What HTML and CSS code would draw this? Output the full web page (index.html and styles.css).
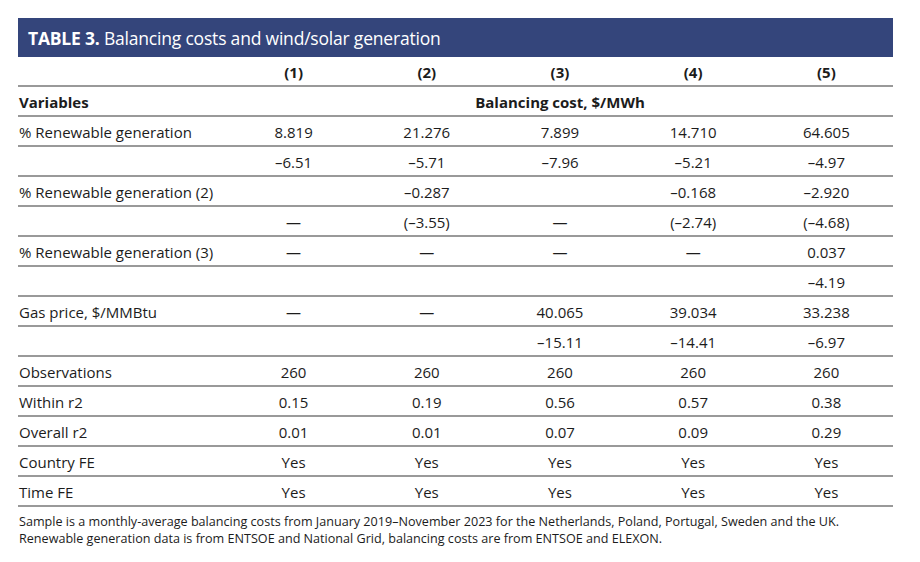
FILE: index.html
```html
<!DOCTYPE html>
<html lang="en">
<head>
<meta charset="utf-8">
<title>Table 3</title>
<link rel="stylesheet" href="styles.css">
</head>
<body>
<div class="wrap">
  <div class="title"><b>TABLE 3.</b> Balancing costs and wind/solar generation</div>
  <table class="data">
    <colgroup>
      <col class="c-label"><col class="c-num"><col class="c-num"><col class="c-num"><col class="c-num"><col class="c-num">
    </colgroup>
    <thead>
      <tr class="hrow"><th></th><th>(1)</th><th>(2)</th><th>(3)</th><th>(4)</th><th>(5)</th></tr>
      <tr class="hrow"><th class="lab">Variables</th><th colspan="5">Balancing cost, $/MWh</th></tr>
    </thead>
    <tbody>
      <tr><td>% Renewable generation</td><td>8.819</td><td>21.276</td><td>7.899</td><td>14.710</td><td>64.605</td></tr>
      <tr><td></td><td>–6.51</td><td>–5.71</td><td>–7.96</td><td>–5.21</td><td>–4.97</td></tr>
      <tr><td>% Renewable generation (2)</td><td></td><td>–0.287</td><td></td><td>–0.168</td><td>–2.920</td></tr>
      <tr><td></td><td>—</td><td>(–3.55)</td><td>—</td><td>(–2.74)</td><td>(–4.68)</td></tr>
      <tr><td>% Renewable generation (3)</td><td>—</td><td>—</td><td>—</td><td>—</td><td>0.037</td></tr>
      <tr><td></td><td></td><td></td><td></td><td></td><td>–4.19</td></tr>
      <tr><td>Gas price, $/MMBtu</td><td>—</td><td>—</td><td>40.065</td><td>39.034</td><td>33.238</td></tr>
      <tr><td></td><td></td><td></td><td>–15.11</td><td>–14.41</td><td>–6.97</td></tr>
      <tr><td>Observations</td><td>260</td><td>260</td><td>260</td><td>260</td><td>260</td></tr>
      <tr><td>Within r2</td><td>0.15</td><td>0.19</td><td>0.56</td><td>0.57</td><td>0.38</td></tr>
      <tr><td>Overall r2</td><td>0.01</td><td>0.01</td><td>0.07</td><td>0.09</td><td>0.29</td></tr>
      <tr><td>Country FE</td><td>Yes</td><td>Yes</td><td>Yes</td><td>Yes</td><td>Yes</td></tr>
      <tr><td>Time FE</td><td>Yes</td><td>Yes</td><td>Yes</td><td>Yes</td><td>Yes</td></tr>
    </tbody>
  </table>
  <p class="note">Sample is a monthly-average balancing costs from January 2019–November 2023 for the Netherlands, Poland, Portugal, Sweden and the UK.<br>Renewable generation data is from ENTSOE and National Grid, balancing costs are from ENTSOE and ELEXON.</p>
</div>
</body>
</html>
```

FILE: styles.css
```css
html, body {
  margin: 0;
  padding: 0;
  background: #ffffff;
}
body {
  font-family: "Open Sans", "Liberation Sans", sans-serif;
  color: #1c1c1c;
}
.wrap {
  width: 875px;
  margin: 18px 0 0 18px;
}
.title {
  background: #34457b;
  color: #ffffff;
  height: 39px;
  box-sizing: border-box;
  padding: 1px 0 0 10px;
  line-height: 38px;
  font-size: 17.5px;
  letter-spacing: -0.2px;
}
.title b {
  font-weight: 700;
}
.data {
  width: 875px;
  border-collapse: collapse;
  table-layout: fixed;
  font-size: 15px;
}
.c-label {
  width: 209px;
}
.c-num {
  width: 133.2px;
}
.data th, .data td {
  height: 26px;
  padding: 2px 0 0 0;
  border-bottom: 2px solid #999999;
  text-align: center;
  vertical-align: middle;
  white-space: nowrap;
}
.data th {
  font-weight: 700;
}
.data th.lab, .data td:first-child {
  text-align: left;
  padding-left: 1px;
}
.note {
  margin: 6px 0 0 1px;
  font-size: 12.6px;
  line-height: 17px;
  color: #1c1c1c;
}
```
